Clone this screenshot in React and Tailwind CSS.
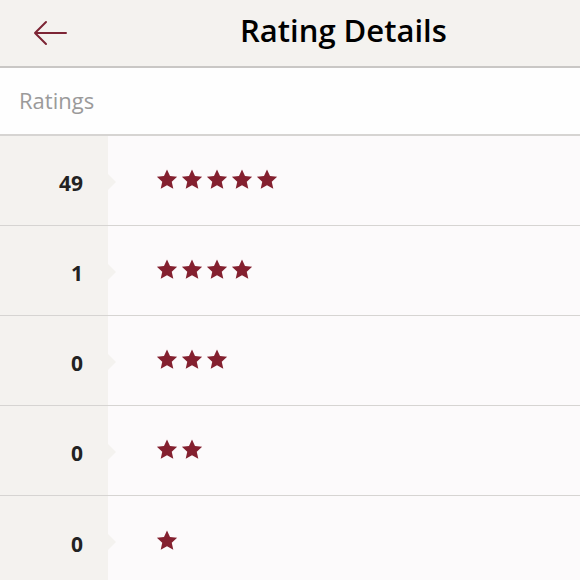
import React from "react";

function Star() {
  return (
    <svg width="22" height="21" viewBox="0 0 24 23" className="shrink-0">
      <path
        d="M12 0.6l3.3 7.2 7.8 0.8-5.9 5.3 1.7 7.8L12 17.8l-6.9 3.9 1.7-7.8L0.9 8.6l7.8-0.8z"
        fill="#84202f"
      />
    </svg>
  );
}

function Row({ count, stars, last }) {
  return (
    <div className={`flex h-[90px] ${last ? "" : "border-b border-[#d6d4d2]"}`}>
      <div className="relative w-[108px] shrink-0 bg-[#f4f2ef] flex items-center justify-end pr-[25px] pt-[6px]">
        <span className="text-[21px] font-bold text-[#222] leading-none">{count}</span>
        <div className="absolute right-[-8px] top-[38px] w-0 h-0 border-y-[8px] border-y-transparent border-l-[8px] border-l-[#f4f2ef]" />
      </div>
      <div className="flex-1 bg-[#fcfafb] flex items-center gap-[3px] pl-[48px] pb-[2px]">
        {Array.from({ length: stars }).map((_, i) => (
          <Star key={i} />
        ))}
      </div>
    </div>
  );
}

export default function App() {
  const rows = [
    [49, 5],
    [1, 4],
    [0, 3],
    [0, 2],
    [0, 1],
  ];
  return (
    <div
      className="w-[580px] h-[580px] overflow-hidden bg-[#fcfafb]"
      style={{ fontFamily: "'Open Sans', sans-serif" }}
    >
      <div className="h-[68px] bg-[#f4f2ef] border-b-2 border-[#c9c7c5] flex items-center">
        <svg width="36" height="28" viewBox="0 0 36 28" className="ml-[32px]">
          <path d="M3 14h31M14 3L3 14l11 11" fill="none" stroke="#7d2535" strokeWidth="2" strokeLinecap="round" strokeLinejoin="round" />
        </svg>
        <div className="ml-[172px] text-[31px] font-semibold text-black leading-none pb-[6px]">Rating Details</div>
      </div>
      <div className="h-[68px] bg-[#fefefe] border-b-2 border-[#d6d4d2] flex items-center pl-[19px]">
        <span className="text-[22px] text-[#9b9a9a] leading-none pb-[2px]">Ratings</span>
      </div>
      {rows.map(([c, s], i) => (
        <Row key={i} count={c} stars={s} last={i === rows.length - 1} />
      ))}
    </div>
  );
}
